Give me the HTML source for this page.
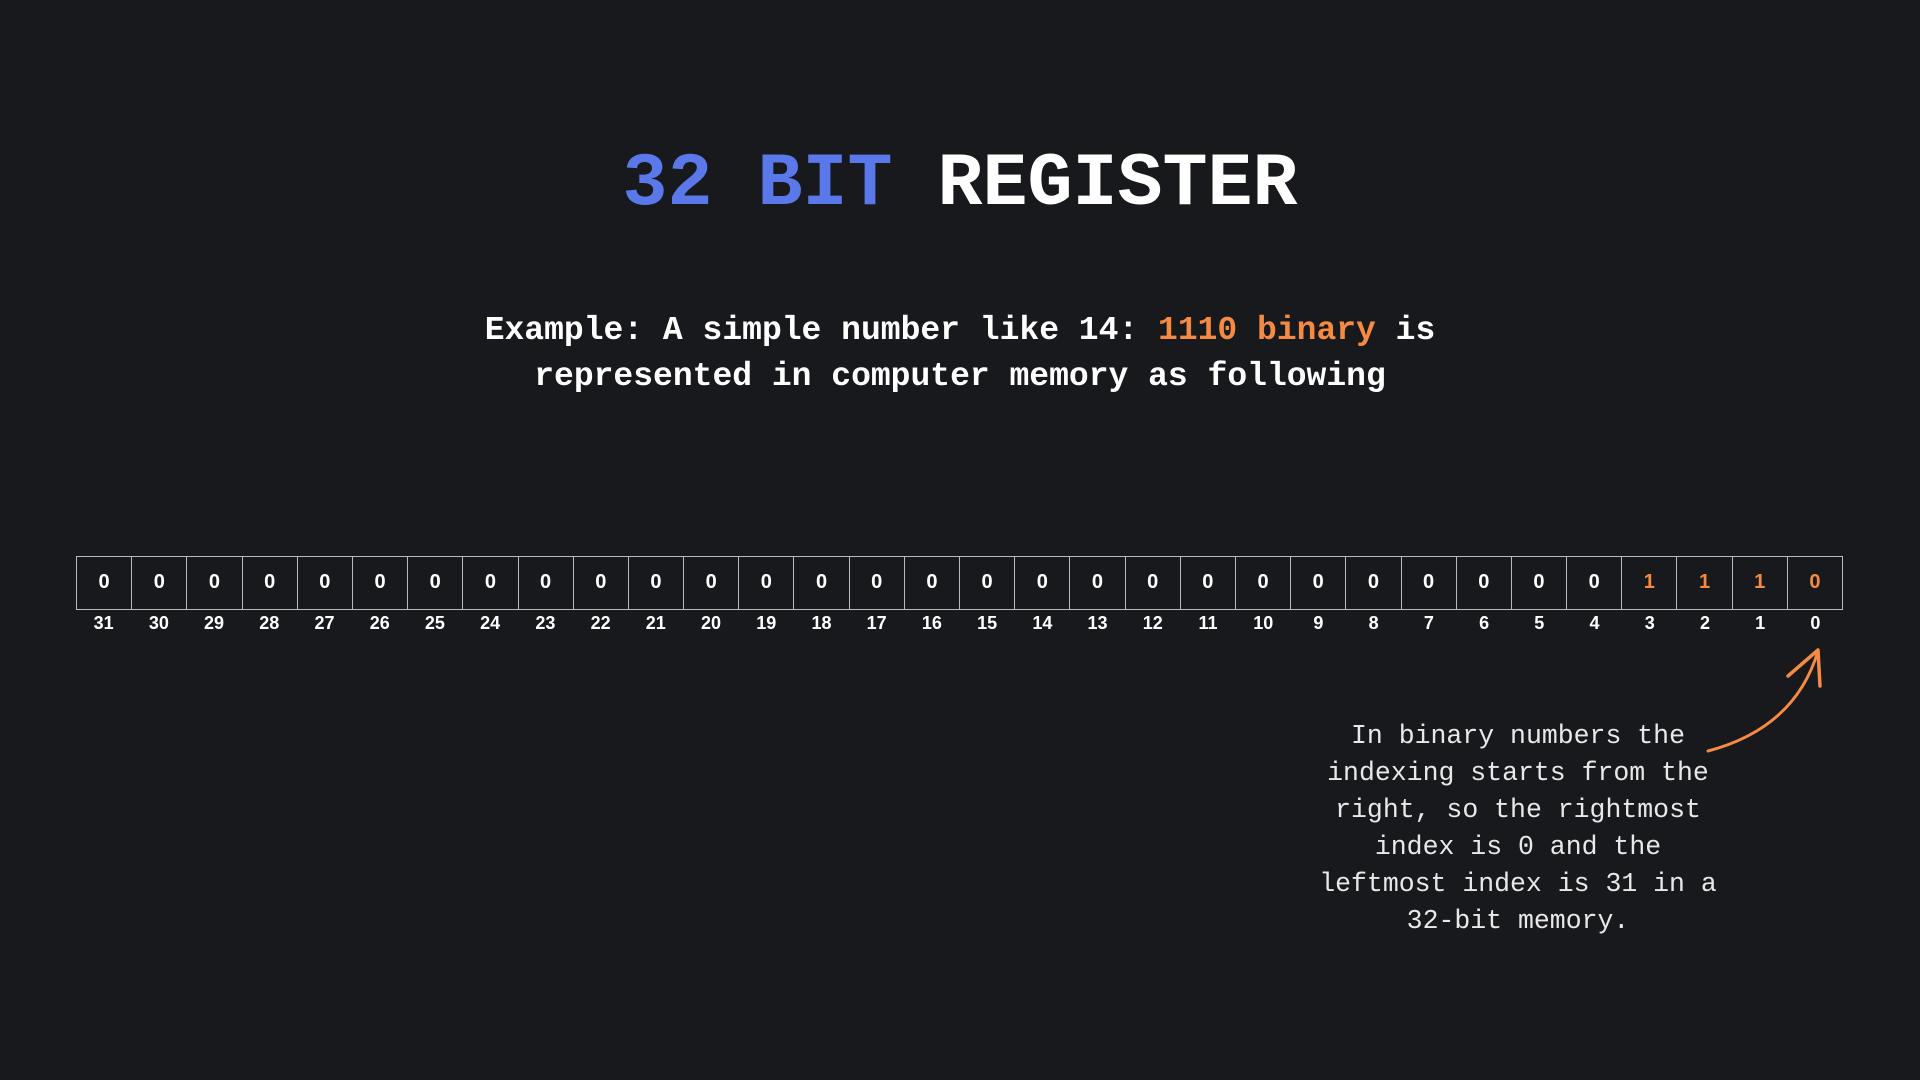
<!DOCTYPE html>
<html><head><style>
body{margin:0;width:1920px;height:1080px;background:#18191d;overflow:hidden;position:relative;font-family:"Liberation Sans",sans-serif;color:#fff}
.title{position:absolute;top:142px;left:0;width:1920px;text-align:center;font:bold 75px "Liberation Mono",monospace}
.sub{position:absolute;top:308px;left:0;width:1920px;text-align:center;font:bold 33px/46px "Liberation Mono",monospace}
.row{position:absolute;left:76px;top:556px;width:1767px;height:54px;box-sizing:border-box;display:grid;grid-template-columns:repeat(32,1fr);border-top:1.5px solid #bbb;border-bottom:1.5px solid #bbb;border-left:1.5px solid #bbb}
.c{border-right:1.5px solid #bbb;text-align:center;line-height:51px;font-weight:bold;font-size:20px}
.idx{position:absolute;left:76px;top:610px;width:1767px;display:grid;grid-template-columns:repeat(32,1fr)}
.i{text-align:center;font-weight:bold;font-size:18px;line-height:26px}
.o{color:#f58a42}
.note{position:absolute;left:1268px;top:718px;width:500px;text-align:center;font:26.5px/37px "Liberation Mono",monospace;color:#e8e8e8}
</style></head><body>
<div class="title"><span style="color:#5a78ea">32 BIT</span> REGISTER</div>
<div class="sub">Example: A simple number like 14: <span class="o">1110 binary</span> is<br>represented in computer memory as following</div>
<div class="row">
<div class="c">0</div><div class="c">0</div><div class="c">0</div><div class="c">0</div><div class="c">0</div><div class="c">0</div><div class="c">0</div><div class="c">0</div>
<div class="c">0</div><div class="c">0</div><div class="c">0</div><div class="c">0</div><div class="c">0</div><div class="c">0</div><div class="c">0</div><div class="c">0</div>
<div class="c">0</div><div class="c">0</div><div class="c">0</div><div class="c">0</div><div class="c">0</div><div class="c">0</div><div class="c">0</div><div class="c">0</div>
<div class="c">0</div><div class="c">0</div><div class="c">0</div><div class="c">0</div><div class="c o">1</div><div class="c o">1</div><div class="c o">1</div><div class="c o">0</div>
</div>
<div class="idx">
<div class="i">31</div><div class="i">30</div><div class="i">29</div><div class="i">28</div><div class="i">27</div><div class="i">26</div><div class="i">25</div><div class="i">24</div>
<div class="i">23</div><div class="i">22</div><div class="i">21</div><div class="i">20</div><div class="i">19</div><div class="i">18</div><div class="i">17</div><div class="i">16</div>
<div class="i">15</div><div class="i">14</div><div class="i">13</div><div class="i">12</div><div class="i">11</div><div class="i">10</div><div class="i">9</div><div class="i">8</div>
<div class="i">7</div><div class="i">6</div><div class="i">5</div><div class="i">4</div><div class="i">3</div><div class="i">2</div><div class="i">1</div><div class="i">0</div>
</div>
<svg style="position:absolute;left:0;top:0" width="1920" height="1080">
<path d="M1708 751 Q1795 728 1818 651" stroke="#f58a42" stroke-width="3" fill="none" stroke-linecap="round"/>
<path d="M1788 676 L1818 650 L1820 686" stroke="#f58a42" stroke-width="3.5" fill="none" stroke-linecap="round" stroke-linejoin="round"/>
</svg>
<div class="note">In binary numbers the<br>indexing starts from the<br>right, so the rightmost<br>index is 0 and the<br>leftmost index is 31 in a<br>32-bit memory.</div>
</body></html>
